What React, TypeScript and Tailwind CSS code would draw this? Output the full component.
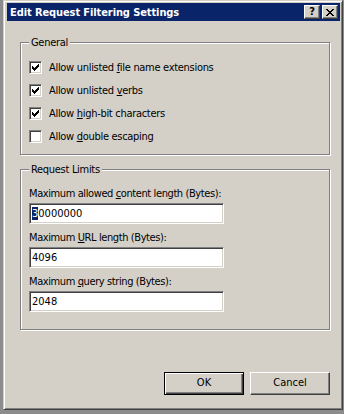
import type { ReactNode } from "react";

const font = { fontFamily: "'DejaVu Sans Condensed', 'Liberation Sans', sans-serif" };

function Mnemonic({ before, letter, after }: { before: string; letter: string; after: string }) {
	return (
		<span>
			{before}
			<span className="underline underline-offset-[1px]">{letter}</span>
			{after}
		</span>
	);
}

function CheckBox({ checked, children }: { checked: boolean; children: ReactNode }) {
	return (
		<div className="flex items-center h-[13px] gap-[7px]">
			<span className="relative w-[13px] h-[13px] bg-white border border-t-[#808080] border-l-[#808080] border-r-white border-b-white shadow-[inset_1px_1px_0_#404040,inset_-1px_-1px_0_#d4d0c8]">
				{checked && (
					<svg width="13" height="13" viewBox="0 0 13 13" className="absolute -left-px -top-px" shapeRendering="crispEdges">
						<path d="M3 5h1v3h-1zM4 6h1v3h-1zM5 7h1v3h-1zM6 6h1v3h-1zM7 5h1v3h-1zM8 4h1v3h-1zM9 3h1v3h-1z" fill="#000" />
					</svg>
				)}
			</span>
			<span className="text-[11px] leading-[13px] tracking-[-0.3px] text-black">{children}</span>
		</div>
	);
}

function Field({ label, value, selectFirst }: { label: ReactNode; value: string; selectFirst?: boolean }) {
	return (
		<div className="flex flex-col">
			<div className="text-[11px] leading-[13px] tracking-[-0.4px] text-black mb-[3px]">{label}</div>
			<div className="w-[195px] h-[21px] bg-white border border-t-[#808080] border-l-[#808080] border-r-white border-b-white shadow-[inset_1px_1px_0_#404040,inset_-1px_-1px_0_#d4d0c8] flex items-center pl-[2px]">
				<span className="text-[11px] leading-[13px] text-black">
					{selectFirst ? (
						<>
							<span className="bg-[#0a246a] text-white">{value[0]}</span>
							{value.slice(1)}
						</>
					) : (
						value
					)}
				</span>
			</div>
		</div>
	);
}

function Group({ title, className, children }: { title: string; className: string; children: ReactNode }) {
	return (
		<div className={`relative w-[310px] border border-[#808080] shadow-[inset_1px_1px_0_#fff,1px_1px_0_#fff] ${className}`}>
			<span className="absolute -top-[7px] left-[8px] bg-[#d4d0c8] px-[2px] text-[11px] leading-[13px] tracking-[-0.3px] text-black">
				{title}
			</span>
			{children}
		</div>
	);
}

export default function App() {
	return (
		<div className="w-[344px] h-[414px] bg-[#8c8c8c]" style={font}>
			<div className="ml-[3px] w-[340px] h-[410px] bg-[#d4d0c8] border border-t-[#d4d0c8] border-l-[#d4d0c8] border-r-[#404040] border-b-[#404040] shadow-[inset_1px_1px_0_#fff,inset_-1px_-1px_0_#808080] pt-[2px] pl-[3px] pr-[2px] flex flex-col">
				<div className="h-[18px] bg-[#0a246a] flex items-center justify-between pl-[3px] pr-[2px]">
					<span className="text-white font-bold text-[11px] leading-[13px] tracking-[-0.1px]">Edit Request Filtering Settings</span>
					<div className="flex gap-[2px]">
						<button className="w-[16px] h-[14px] bg-[#d4d0c8] border border-t-white border-l-white border-r-[#404040] border-b-[#404040] shadow-[inset_-1px_-1px_0_#808080] flex items-center justify-center text-black font-bold text-[11px] leading-[11px] pb-[1px]">
							?
						</button>
						<button className="w-[16px] h-[14px] bg-[#d4d0c8] border border-t-white border-l-white border-r-[#404040] border-b-[#404040] shadow-[inset_-1px_-1px_0_#808080] flex items-center justify-center">
							<svg width="8" height="7" viewBox="0 0 8 7" shapeRendering="crispEdges">
								<path d="M0 0h2v1h-2zM6 0h2v1h-2zM1 1h2v1h-2zM5 1h2v1h-2zM2 2h4v1h-4zM3 3h2v1h-2zM2 4h4v1h-4zM1 5h2v1h-2zM5 5h2v1h-2zM0 6h2v1h-2zM6 6h2v1h-2z" fill="#000" />
							</svg>
						</button>
					</div>
				</div>

				<div className="flex flex-col pl-[13px] pt-[21px]">
					<Group title="General" className="h-[113px] pt-[18px] pl-[8px]">
						<div className="flex flex-col gap-[10px]">
							<CheckBox checked>
								<Mnemonic before="Allow unlisted " letter="f" after="ile name extensions" />
							</CheckBox>
							<CheckBox checked>
								<Mnemonic before="Allow unlisted " letter="v" after="erbs" />
							</CheckBox>
							<CheckBox checked>
								<Mnemonic before="Allow " letter="h" after="igh-bit characters" />
							</CheckBox>
							<CheckBox checked={false}>
								<Mnemonic before="Allow " letter="d" after="ouble escaping" />
							</CheckBox>
						</div>
					</Group>

					<Group title="Request Limits" className="mt-[14px] h-[161px] pt-[17px] pl-[8px]">
						<div className="flex flex-col gap-[7px]">
							<Field
								label={<Mnemonic before="Maximum allowed " letter="c" after="ontent length (Bytes):" />}
								value="30000000"
								selectFirst
							/>
							<Field label={<Mnemonic before="Maximum " letter="U" after="RL length (Bytes):" />} value="4096" />
							<Field label={<Mnemonic before="Maximum " letter="q" after="uery string (Bytes):" />} value="2048" />
						</div>
					</Group>

					<div className="w-[310px] flex justify-end gap-[6px] mt-[42px]">
						<button className="w-[80px] h-[23px] bg-[#d4d0c8] border border-black shadow-[inset_1px_1px_0_#fff,inset_-1px_-1px_0_#404040,inset_-2px_-2px_0_#808080] text-[11px] text-black">
							OK
						</button>
						<button className="w-[80px] h-[23px] bg-[#d4d0c8] border border-t-white border-l-white border-r-[#404040] border-b-[#404040] shadow-[inset_-1px_-1px_0_#808080] text-[11px] text-black">
							Cancel
						</button>
					</div>
				</div>
			</div>
		</div>
	);
}
